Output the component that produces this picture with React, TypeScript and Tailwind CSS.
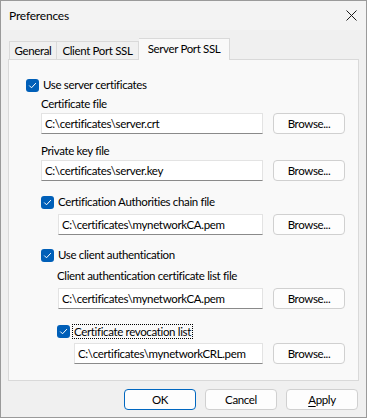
import React from "react";

const font = { fontFamily: '"Segoe UI", Lato, "Noto Sans", sans-serif' };

function Check({ focused = false, children }: { focused?: boolean; children: React.ReactNode }) {
  return (
    <div className="flex h-[16px] items-center">
      <span className="flex h-[13px] w-[13px] shrink-0 items-center justify-center rounded-[3px] bg-[#005fb8]">
        <svg width="9" height="9" viewBox="0 0 9 9" fill="none">
          <path d="M1.5 4.8 L3.5 6.8 L7.6 2.4" stroke="white" strokeWidth="1" strokeLinecap="round" strokeLinejoin="round" />
        </svg>
      </span>
      <span
        className={
          focused
            ? "ml-[2px] whitespace-nowrap border border-dotted border-black px-[1px] leading-[13px]"
            : "ml-[4px] whitespace-nowrap leading-[16px]"
        }
      >
        {children}
      </span>
    </div>
  );
}

function Label({ children }: { children: React.ReactNode }) {
  return <div className="flex h-[16px] items-center whitespace-nowrap leading-[16px]">{children}</div>;
}

function Button({ children, primary = false, className = "" }: { children: React.ReactNode; primary?: boolean; className?: string }) {
  return (
    <button
      className={
        "flex h-[21px] w-[72px] items-center justify-center rounded-[4px] border bg-[#fdfdfd] text-black " +
        (primary ? "border-[#0067c0]" : "border-[#d0d0d0]") +
        " " +
        className
      }
    >
      {children}
    </button>
  );
}

function FileRow({ value, indent }: { value: string; indent: string }) {
  return (
    <div className="flex items-center">
      <div
        className={
          indent +
          " flex h-[21px] min-w-0 flex-1 items-center overflow-hidden whitespace-nowrap border border-[#e3e3e3] border-b-[#8a8a8a] bg-white pl-[3px] text-black"
        }
      >
        {value}
      </div>
      <div className="ml-[10px] mr-[13px] shrink-0">
        <Button className="w-[71px]">Browse...</Button>
      </div>
    </div>
  );
}

export default function App() {
  return (
    <div
      className="flex h-[418px] w-[367px] flex-col border border-[#9a9a9a] bg-[#f0f0f0] text-[11.5px] tracking-[-0.35px] text-black"
      style={font}
    >
      {/* Title bar */}
      <div className="flex h-[29px] items-center justify-between bg-[#f3f3f3] pl-[8px] pr-[9px]">
        <span className="text-[12px] tracking-[-0.2px]">Preferences</span>
        <svg width="11" height="11" viewBox="0 0 11 11" fill="none">
          <path d="M0.5 0.5 L10.5 10.5 M10.5 0.5 L0.5 10.5" stroke="#1a1a1a" strokeWidth="1" />
        </svg>
      </div>

      <div className="flex flex-1 flex-col px-[7px] pt-[8px]">
        {/* Tabs */}
        <div className="relative z-10 flex h-[21px] items-end pl-[1px]">
          <div className="flex h-[18px] w-[48px] items-center justify-center border border-b-0 border-[#d9d9d9]">General</div>
          <div className="flex h-[18px] w-[82px] items-center justify-center border border-b-0 border-l-0 border-[#d9d9d9]">Client Port SSL</div>
          <div className="mb-[-1px] flex h-[22px] w-[91px] items-center justify-center border border-b-0 border-l-0 border-[#d9d9d9] bg-[#f9f9f9] pb-[2px]">
            Server Port SSL
          </div>
        </div>

        {/* Panel */}
        <div className="flex w-[351px] flex-col border border-[#d9d9d9] bg-[#f9f9f9] pb-[16px] pt-[17px]">
          <div className="pl-[17px]">
            <Check>Use server certificates</Check>
          </div>
          <div className="mt-[3px] pl-[32px]">
            <Label>Certificate file</Label>
          </div>
          <div className="mt-[1px]">
            <FileRow indent="ml-[32px]" value="C:\certificates\server.crt" />
          </div>
          <div className="mt-[9px] pl-[32px]">
            <Label>Private key file</Label>
          </div>
          <div className="mt-[1px]">
            <FileRow indent="ml-[32px]" value="C:\certificates\server.key" />
          </div>
          <div className="mt-[13px] pl-[32px]">
            <Check>Certification Authorities chain file</Check>
          </div>
          <div className="mt-[4px]">
            <FileRow indent="ml-[49px]" value="C:\certificates\mynetworkCA.pem" />
          </div>
          <div className="mt-[12px] pl-[32px]">
            <Check>Use client authentication</Check>
          </div>
          <div className="mt-[5px] pl-[48px]">
            <Label>Client authentication certificate list file</Label>
          </div>
          <div className="mt-[4px]">
            <FileRow indent="ml-[49px]" value="C:\certificates\mynetworkCA.pem" />
          </div>
          <div className="mt-[14px] pl-[48px]">
            <Check focused>Certificate revocation list</Check>
          </div>
          <div className="mt-[4px]">
            <FileRow indent="ml-[65px]" value="C:\certificates\mynetworkCRL.pem" />
          </div>
        </div>

        {/* Footer buttons */}
        <div className="mt-[8px] flex justify-end gap-[9px] pr-[1px]">
          <Button primary>OK</Button>
          <Button>Cancel</Button>
          <Button>
            <span>
              <span className="underline underline-offset-[2px]">A</span>pply
            </span>
          </Button>
        </div>
      </div>
    </div>
  );
}
